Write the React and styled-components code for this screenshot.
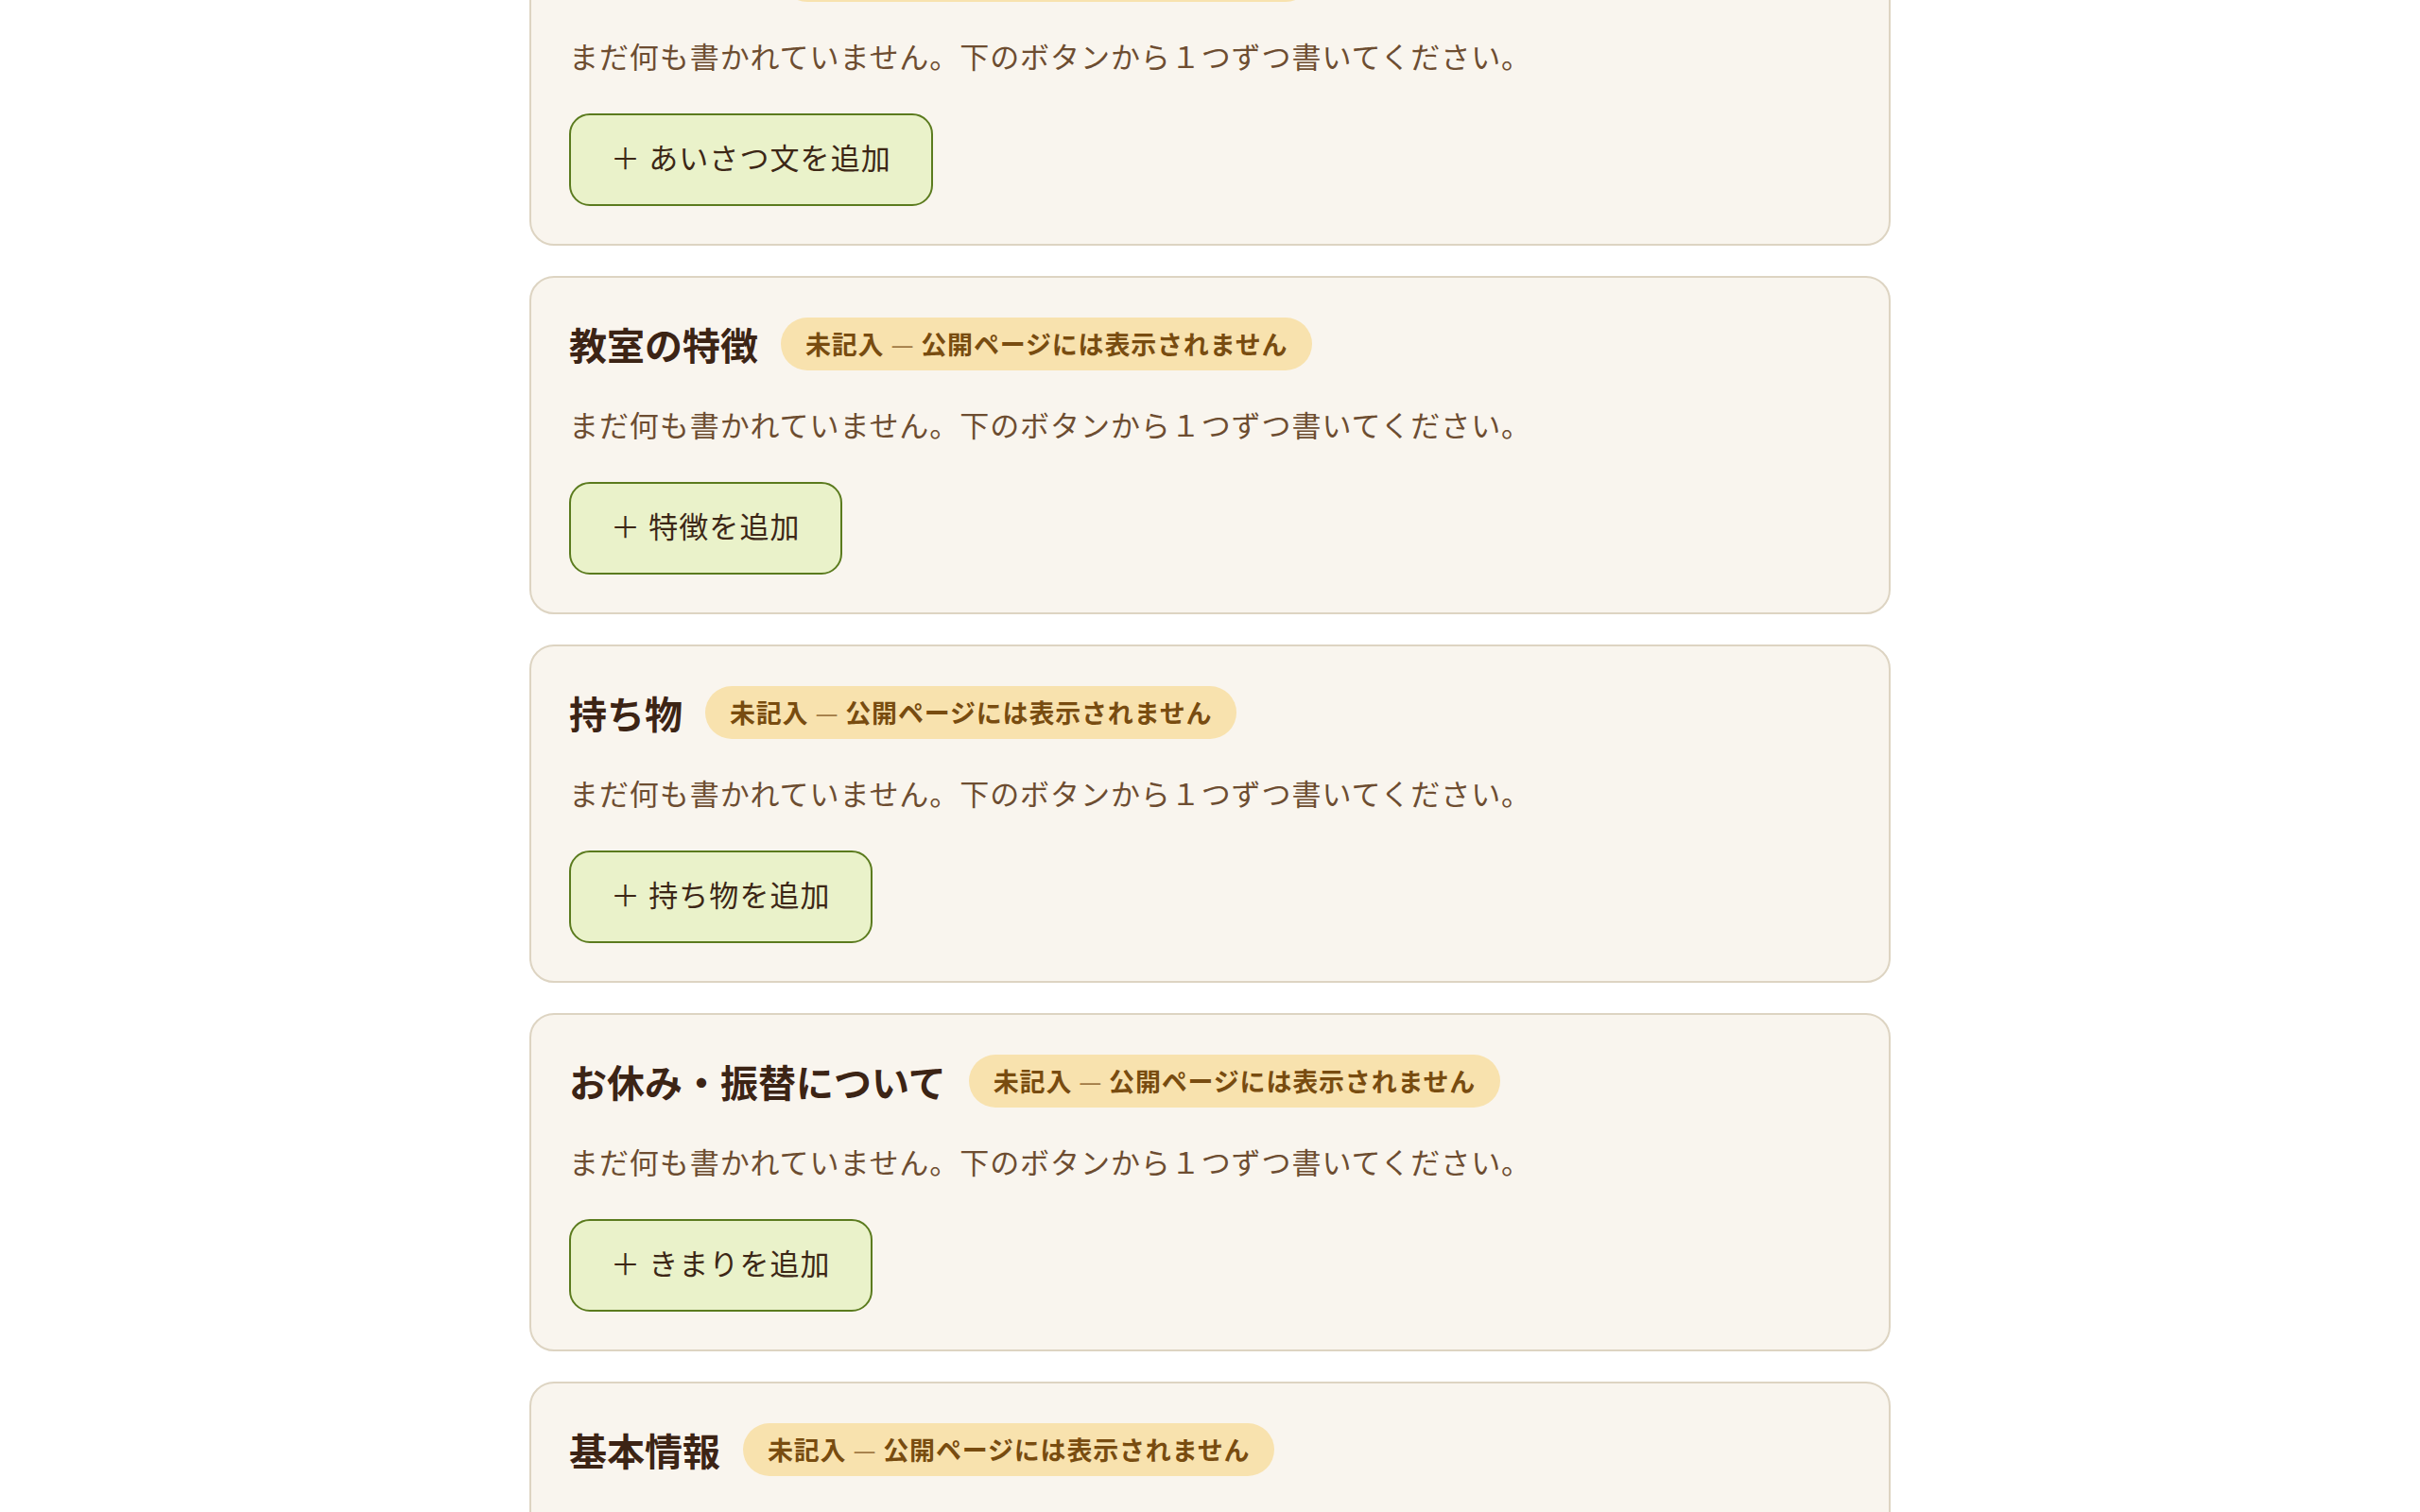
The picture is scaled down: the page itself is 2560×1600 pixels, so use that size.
import React from "react";
import styled, { createGlobalStyle } from "styled-components";

const GlobalStyle = createGlobalStyle`
  body {
    margin: 0;
    background: #ffffff;
    font-family: "Noto Sans CJK JP", "Noto Sans", sans-serif;
  }
`;

const SectionList = styled.main`
  width: 1440px;
  margin: -98px auto 0;
  display: flex;
  flex-direction: column;
  gap: 32px;
`;

const Card = styled.section`
  background: #f9f5ee;
  border: 2px solid #ddd4c2;
  border-radius: 26px;
  padding: 40px;
`;

const CardHeader = styled.div`
  display: flex;
  align-items: center;
  gap: 24px;
  height: 60px;
  margin-bottom: 28px;
`;

const Title = styled.h2`
  margin: 0;
  font-size: 40px;
  line-height: 60px;
  font-weight: 700;
  color: #3c2415;
`;

const Badge = styled.span`
  display: inline-block;
  height: 56px;
  line-height: 56px;
  padding: 0 26px;
  border-radius: 999px;
  background: #f8e2ae;
  color: #784c10;
  font-size: 27px;
  font-weight: 700;
  letter-spacing: 0.03em;
`;

const Dash = styled.span`
  font-weight: 400;
  color: #a07a45;
`;

const EmptyText = styled.p`
  margin: 0 0 34px;
  font-size: 31px;
  line-height: 54px;
  color: #6d4d31;
  letter-spacing: 0.03em;
`;

const AddButton = styled.button`
  box-sizing: border-box;
  height: 98px;
  padding: 0 42px 6px;
  border: 2px solid #5b7b1e;
  border-radius: 22px;
  background: #eaf2ca;
  color: #3c2716;
  font-family: inherit;
  font-size: 31px;
  line-height: 1.4;
  letter-spacing: 0.035em;
  cursor: pointer;
`;

const sections = [
  { title: "ごあいさつ", action: "あいさつ文を追加" },
  { title: "教室の特徴", action: "特徴を追加" },
  { title: "持ち物", action: "持ち物を追加" },
  { title: "お休み・振替について", action: "きまりを追加" },
  { title: "基本情報", action: "項目を追加" },
];

const App = () => {
  return (
    <>
      <GlobalStyle />
      <SectionList>
        {sections.map((s) => (
          <Card key={s.title}>
            <CardHeader>
              <Title>{s.title}</Title>
              <Badge>
                未記入 <Dash>—</Dash> 公開ページには表示されません
              </Badge>
            </CardHeader>
            <EmptyText>
              まだ何も書かれていません。下のボタンから１つずつ書いてください。
            </EmptyText>
            <AddButton type="button">＋ {s.action}</AddButton>
          </Card>
        ))}
      </SectionList>
    </>
  );
};

export default App;
